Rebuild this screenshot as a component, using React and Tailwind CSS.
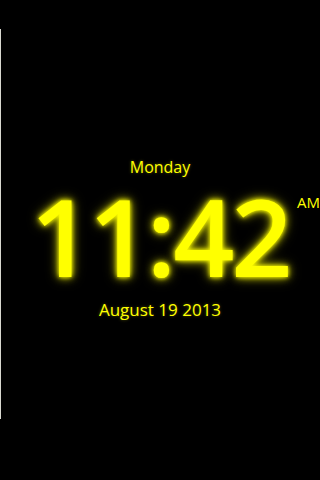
import React from "react";

export default function App() {
  return (
    <div className="relative h-[480px] w-[320px] overflow-hidden bg-black font-['Open_Sans','DejaVu_Sans',sans-serif] text-[#ffff00]">
      <div className="absolute left-0 top-[29px] h-[390px] w-px bg-[#d8d8d0]" />
      <div className="flex h-full flex-col items-center pt-[156px]">
        <div className="text-[16px] leading-[22px]" style={{ textShadow: "0 0 3px rgba(255,255,0,0.35)" }}>
          Monday
        </div>
        <div className="relative mt-[13px] flex w-full justify-center">
          <div
            className="text-[107px] font-semibold leading-[90px] tracking-[-3px]"
            style={{ textShadow: "0 0 4px #ffff00, 0 0 9px rgba(255,255,0,0.8), 0 0 14px rgba(255,255,0,0.4)" }}
          >
            11:42
          </div>
          <div className="absolute right-0 top-px text-[15px] leading-[20px]">AM</div>
        </div>
        <div className="mt-[18px] text-[17px] leading-[22px]" style={{ textShadow: "0 0 3px rgba(255,255,0,0.35)" }}>
          August 19 2013
        </div>
      </div>
    </div>
  );
}
